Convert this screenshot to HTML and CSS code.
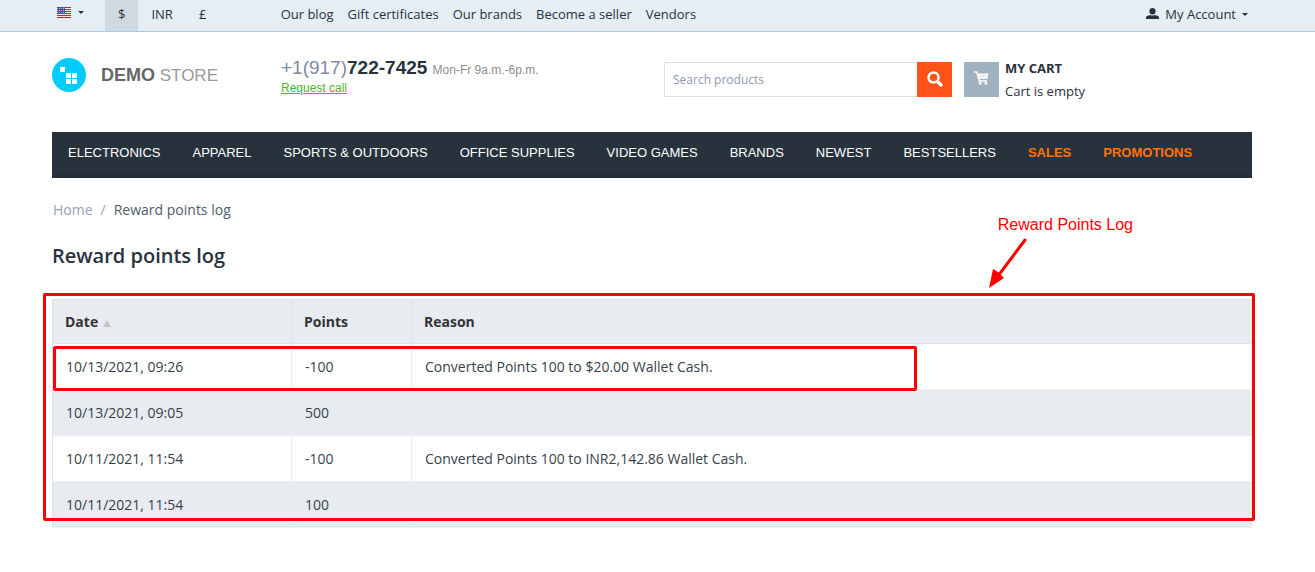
FILE: index.html
```html
<!DOCTYPE html>
<html lang="en">
<head>
    <meta charset="UTF-8">
    <meta name="viewport" content="width=device-width, initial-scale=1.0">
    <title>Reward points log</title>
    <link rel="stylesheet" href="styles.css">
</head>
<body>
    <div class="top-panel">
        <div class="container top-grid">
            <div class="selectors">
                <button type="button" class="lang" aria-label="Language">
                    <svg class="flag" viewBox="0 0 14 11" width="14" height="11">
                        <rect width="14" height="11" fill="#f4eeee"/>
                        <path d="M0 .5h14M0 2.5h14M0 4.5h14M0 6.5h14M0 8.5h14M0 10.5h14" stroke="#b3252f"/>
                        <rect width="8" height="7" fill="#4a4aa0"/>
                        <path d="M0 1.5h8M0 3.5h8M0 5.5h8" stroke="#b9b9dd" stroke-dasharray="1 1"/>
                    </svg>
                    <span class="caret"></span>
                </button>
                <a href="#" class="currency active">$</a>
                <a href="#" class="currency">INR</a>
                <a href="#" class="currency">£</a>
            </div>
            <div class="quick-links">
                <a href="#">Our blog</a>
                <a href="#">Gift certificates</a>
                <a href="#">Our brands</a>
                <a href="#">Become a seller</a>
                <a href="#">Vendors</a>
            </div>
            <button type="button" class="account">
                <svg viewBox="0 0 13 12" width="13" height="12" fill="#27323d">
                    <ellipse cx="6.5" cy="3.2" rx="3.1" ry="3.2"/>
                    <path d="M0 11V9.6Q0 7.6 4.3 6.9Q6.5 8.2 8.7 6.9Q13 7.6 13 9.6V11Z"/>
                </svg>
                My Account
                <span class="caret"></span>
            </button>
        </div>
    </div>

    <div class="container header">
        <a href="#" class="logo">
            <svg viewBox="0 0 34 34" width="34" height="34">
                <circle cx="17" cy="17" r="17" fill="#00ccff"/>
                <path d="M8 9h5v5h-5zM14 15h5v5h-5zM20 15h5v5h-5zM14 21h5v5h-5zM20 21h5v5h-5z" fill="#fff"/>
            </svg>
            <span><b>DEMO</b> STORE</span>
        </a>
        <div class="phone">
            <div><span class="code">+1(917)</span><b>722-7425</b> <small>Mon-Fr 9a.m.-6p.m.</small></div>
            <a href="#">Request call</a>
        </div>
        <div class="tools">
            <form class="search">
                <input type="text" placeholder="Search products" aria-label="Search products">
                <button type="button" aria-label="Search">
                    <svg viewBox="0 0 16 16" width="16" height="16" fill="none" stroke="#fff">
                        <circle cx="6.5" cy="6.5" r="5" stroke-width="2.4"/>
                        <path d="M10.5 10.5L14 14" stroke-width="3.4" stroke-linecap="round"/>
                    </svg>
                </button>
            </form>
            <a href="#" class="cart">
                <span class="cart-icon">
                    <svg viewBox="0 0 15 14" width="15" height="14">
                        <path d="M0 1H2.7L5.3 10H13" fill="none" stroke="#fff" stroke-width="1.5"/>
                        <path d="M3.8 2.5H14.5L13.4 8H5.3Z" fill="#fff"/>
                        <path d="M5 4.3H14M5.5 6.2H14M7 3V8M9.3 3V8M11.6 3V8" stroke="#9fb2c1" stroke-width=".2"/>
                        <circle cx="6.2" cy="12.3" r="1.4" fill="#fff"/>
                        <circle cx="12" cy="12.3" r="1.4" fill="#fff"/>
                    </svg>
                </span>
                <span class="cart-text"><b>MY CART</b>Cart is empty</span>
            </a>
        </div>
    </div>

    <div class="container">
        <nav class="menu">
            <a href="#">ELECTRONICS</a>
            <a href="#">APPAREL</a>
            <a href="#">SPORTS &amp; OUTDOORS</a>
            <a href="#">OFFICE SUPPLIES</a>
            <a href="#">VIDEO GAMES</a>
            <a href="#">BRANDS</a>
            <a href="#">NEWEST</a>
            <a href="#">BESTSELLERS</a>
            <a href="#" class="hot">SALES</a>
            <a href="#" class="hot">PROMOTIONS</a>
        </nav>

        <div class="breadcrumbs">
            <a href="#">Home</a><span class="slash">/</span><span>Reward points log</span>
        </div>
        <h1>Reward points log</h1>

        <div class="log">
            <table>
                <thead>
                    <tr>
                        <th class="col-date"><a href="#">Date<span class="sort"></span></a></th>
                        <th class="col-points">Points</th>
                        <th>Reason</th>
                    </tr>
                </thead>
                <tbody>
                    <tr>
                        <td>10/13/2021, 09:26</td>
                        <td>-100</td>
                        <td>Converted Points 100 to $20.00 Wallet Cash.</td>
                    </tr>
                    <tr>
                        <td>10/13/2021, 09:05</td>
                        <td>500</td>
                        <td></td>
                    </tr>
                    <tr>
                        <td>10/11/2021, 11:54</td>
                        <td>-100</td>
                        <td>Converted Points 100 to INR2,142.86 Wallet Cash.</td>
                    </tr>
                    <tr>
                        <td>10/11/2021, 11:54</td>
                        <td>100</td>
                        <td></td>
                    </tr>
                </tbody>
            </table>

            <!-- red marks over the table -->
            <div class="mark mark-table"></div>
            <div class="mark mark-row"></div>
            <div class="note">
                Reward Points Log
                <svg viewBox="0 0 40 52" width="40" height="52">
                    <path d="M36 2L9 38" stroke="#f00" stroke-width="3" stroke-linecap="round"/>
                    <path d="M0 50L4 31L9 34L15 40Z" fill="#f00"/>
                </svg>
            </div>
        </div>
    </div>
</body>
</html>
```
FILE: styles.css
```css
*{
    box-sizing: border-box;
}
body{
    margin: 0;
    background-color: #fff;
    color: #27323d;
    font-family: "Open Sans", "Noto Sans", sans-serif;
    font-size: 14px;
}
a{
    color: inherit;
    text-decoration: none;
}
button{
    border: 0;
    padding: 0;
    background: none;
    color: inherit;
    font: inherit;
    cursor: pointer;
}
svg{
    display: block;
    flex: none;
}
.container{
    margin: 0 63px 0 52px;
}
.caret{
    border: 3px solid transparent;
    border-top-color: #27323d;
    border-bottom: 0;
}

/* top panel */
.top-panel{
    background-color: #e5eef4;
    border-bottom: 1px solid #aecbdd;
    font-size: 13px;
    line-height: 18px;
}
.top-grid{
    display: grid;
    grid-template-columns: 229fr 867fr auto;
}
.selectors{
    display: flex;
}
.lang{
    display: flex;
    align-items: center;
    gap: 7px;
    padding: 0 21px 6px 5px;
}
.currency{
    padding: 5px 13px 8px;
}
.active{
    background-color: #ced9e1;
}
.quick-links{
    display: flex;
    gap: 14px;
    padding-top: 5px;
}
.account{
    display: flex;
    align-items: center;
    gap: 6px;
    padding: 0 4px 3px 0;
}

/* header */
.header{
    display: grid;
    grid-template-columns: 229fr 383fr 588fr;
    height: 100px;
    padding-top: 26px;
}
.logo{
    display: flex;
    align-items: center;
    gap: 15px;
    height: 34px;
    color: #999;
    font-family: "Liberation Sans", Arial, sans-serif;
    font-size: 17px;
}
.logo b{
    color: #666;
    font-size: 18px;
}
.phone{
    font-family: "Liberation Sans", Arial, sans-serif;
    font-size: 19px;
    line-height: 20px;
}
.phone .code{
    color: #7c8ba3;
}
.phone small{
    color: #8d8d8d;
    font-size: 12px;
}
.phone a{
    display: block;
    color: #4cb42c;
    font-size: 12px;
    line-height: 16px;
    text-decoration: underline;
}
.tools{
    display: flex;
    gap: 12px;
    padding-top: 4px;
}
.search{
    display: flex;
    width: 288px;
    height: 35px;
}
.search input{
    flex: 1;
    min-width: 0;
    padding: 0 8px;
    border: 1px solid #d9e0e9;
    border-right: 0;
    font: 12px "Open Sans", sans-serif;
}
.search input::placeholder{
    color: #8e9bb0;
}
.search button{
    display: flex;
    align-items: center;
    justify-content: center;
    width: 35px;
    padding-bottom: 2px;
    background-color: #ff5319;
}
.cart{
    display: flex;
    gap: 6px;
    font-size: 13px;
}
.cart-icon{
    display: flex;
    align-items: center;
    justify-content: center;
    width: 35px;
    height: 35px;
    padding-bottom: 4px;
    background-color: #9fb2c1;
}
.cart-text{
    margin-top: -5px;
    line-height: 23px;
}
.cart-text b{
    display: block;
}

/* menu */
.menu{
    display: flex;
    border-bottom: 4px solid #232e38;
    background-color: #27323d;
    color: #fff;
    font-family: "Liberation Sans", Arial, sans-serif;
    font-size: 13px;
    line-height: 42px;
    white-space: nowrap;
}
.menu a{
    padding: 0 16px;
}
.menu .hot{
    color: #ff7302;
    font-weight: bold;
}

/* content */
.breadcrumbs{
    padding: 22px 1px 0;
    color: #4c5e68;
    line-height: 20px;
}
.breadcrumbs a, .slash{
    color: #93a3b8;
}
.slash{
    margin: 0 8px;
}
h1{
    margin: 22px 0 29px;
    font-size: 20px;
    font-weight: 600;
    line-height: 28px;
}
.log{
    position: relative;
}
table{
    width: 100%;
    table-layout: fixed;
    border-collapse: separate;
    border-spacing: 0;
}
th, td{
    padding: 0 13px;
    border-left: 1px solid #ebeef1;
    text-align: left;
}
th{
    height: 45px;
    padding: 0 12px;
    border: 1px solid #dbe1e8;
    border-right: 0;
    background-color: #e8ebf0;
    color: #333;
}
td{
    height: 46px;
    border-bottom: 1px solid #ebeef1;
    color: #35424a;
}
td:first-child{
    border-left-color: #dbe1e8;
}
tbody tr:nth-child(even){
    background-color: #e8ebf0;
}
.col-date{
    width: 239px;
}
.col-points{
    width: 120px;
}
.sort{
    display: inline-block;
    margin-left: 5px;
    border: 4px solid transparent;
    border-top: 0;
    border-bottom: 7px solid #c0c5ca;
}

.mark{
    position: absolute;
    border: 3px solid #f00;
    border-radius: 2px;
    pointer-events: none;
}
.mark-table{
    top: -6px;
    right: -3px;
    bottom: 7px;
    left: -9px;
}
.mark-row{
    top: 47px;
    left: 1px;
    width: 72%;
    height: 45px;
}
.note{
    position: absolute;
    top: -84px;
    right: 119px;
    color: #f00;
    font-family: "Liberation Sans", Arial, sans-serif;
    font-size: 16px;
    line-height: 20px;
}
.note svg{
    margin: 3px 0 0 -9px;
}
```
